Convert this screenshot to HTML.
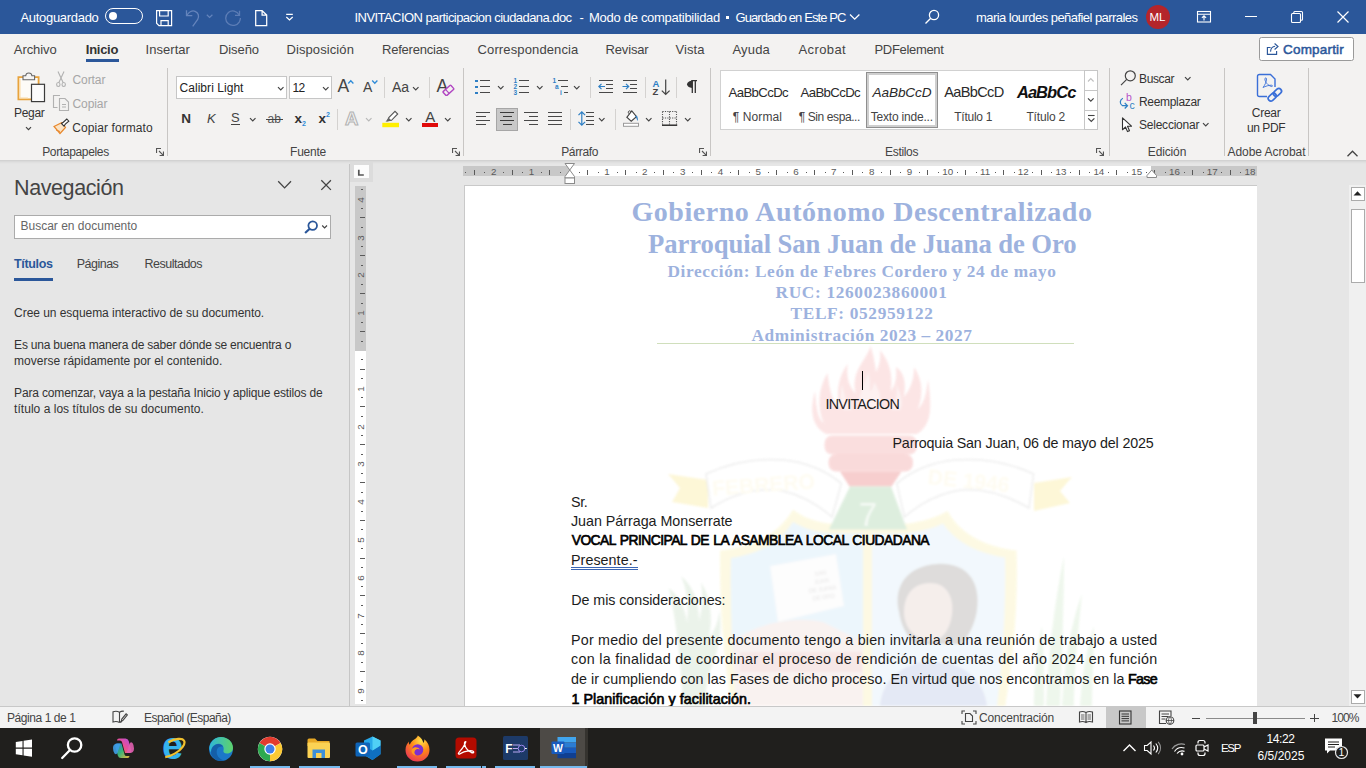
<!DOCTYPE html>
<html lang="es"><head><meta charset="utf-8"><title>INVITACION participacion ciudadana.doc - Word</title><style>
html,body{margin:0;padding:0}
body{width:1366px;height:768px;overflow:hidden;position:relative;background:#e6e6e6;font-family:"Liberation Sans",sans-serif;color:#444}
#r{position:absolute;left:0;top:0;width:1366px;height:768px;overflow:hidden}
#r>div,#r>svg,#r>span{position:absolute;display:block}
#r>span{white-space:pre;line-height:1}
.f{font-family:"Liberation Sans",sans-serif}
.g{font-family:"Liberation Serif",serif}
</style></head><body><div id="r">
<div style="left:0px;top:0px;width:1366px;height:34px;background:#2b579a;"></div>
<div style="left:0px;top:34px;width:1366px;height:126px;background:#f3f2f1;"></div>
<div style="left:0px;top:160px;width:1366px;height:1px;background:#d2d2d2;"></div>
<div style="left:0px;top:161px;width:1366px;height:1px;background:#dadada;"></div>
<div style="left:0px;top:162px;width:1366px;height:1px;background:#e0e0e0;"></div>
<div style="left:0px;top:163px;width:1366px;height:1px;background:#e4e4e4;"></div>
<span class="f" style="left:20.5px;top:11.00px;font-size:13px;color:#fff;letter-spacing:-0.307px;">Autoguardado</span>
<div style="left:105px;top:7.8px;width:36px;height:14px;border:1px solid #fff;border-radius:8px"></div>
<div style="left:109px;top:11.8px;width:8px;height:8px;border-radius:4px;background:#fff"></div>
<svg style="left:155px;top:9px;" width="18" height="18" viewBox="0 0 18 18"><g fill="none" stroke="#fff" stroke-width="1.200"><path d="M1.600 1.600h15v15h-12.600l-2.400-2.400z"/><path d="M4.600 1.600v5.400h8.600v-5.400M6 16.600v-5h7.200v5"/></g></svg>
<svg style="left:184px;top:8px;" width="30" height="20" viewBox="0 0 30 20"><g fill="none" stroke="#6484bc" stroke-width="1.300"><path d="M2.500 2.300v5.400h5.800"/><path d="M2.900 7.300c1.800-3.600 5.400-5.200 8.200-4 3.400 1.500 4.300 5 2.600 8.200l-5 6.800"/><path d="M22.800 6.800l2.800 2.600 2.800-2.600" stroke-width="1.200"/></g></svg>
<svg style="left:222px;top:6px;" width="20" height="22" viewBox="0 0 20 22"><g fill="none" stroke="#5c7db6" stroke-width="1.300"><path d="M17.500 4.800v4.500h-4.500"/><path d="M17.200 9c-2.200-4.200-7.400-5.300-10.800-2.500-3.600 3-3.600 8.400 0 11.300 3.500 2.800 8.700 1.900 11-2 .700-1.300 1-2.500 1-3.800"/></g></svg>
<svg style="left:254px;top:9px;" width="14" height="18" viewBox="0 0 14 18"><path d="M1.700 1.700h6.400l4.600 4.400v10.500h-11z M8.100 1.700v4.400h4.600" fill="none" stroke="#fff" stroke-width="1.250"/></svg>
<svg style="left:284px;top:12px;" width="12" height="10" viewBox="0 0 12 10"><path d="M2.200 2.400h6.600M2.300 5l3.200 2.900 3.200-2.900" fill="none" stroke="#fff" stroke-width="1.200"/></svg>
<span class="f" style="left:354.5px;top:11.00px;font-size:13px;color:#fff;letter-spacing:-0.558px;">INVITACION participacion ciudadana.doc</span>
<span class="f" style="left:579.5px;top:11.00px;font-size:13px;color:#fff;">-</span>
<span class="f" style="left:589.0px;top:11.00px;font-size:13px;color:#fff;letter-spacing:-0.287px;">Modo de compatibilidad</span>
<div style="left:726px;top:16px;width:3px;height:3px;background:#fff;"></div>
<span class="f" style="left:735.5px;top:11.00px;font-size:13px;color:#fff;letter-spacing:-0.905px;">Guardado en Este PC</span>
<svg style="left:848px;top:11px;" width="14" height="12" viewBox="0 0 14 12"><path d="M2 3.500l4.700 4.700 4.700-4.700" fill="none" stroke="#fff" stroke-width="1.300"/></svg>
<svg style="left:923px;top:8px;" width="18" height="18" viewBox="0 0 18 18"><g fill="none" stroke="#fff" stroke-width="1.300"><circle cx="11" cy="7" r="4.600"/><path d="M7.700 10.300l-5.200 5.200"/></g></svg>
<span class="f" style="left:976.0px;top:11.00px;font-size:13px;color:#fff;letter-spacing:-0.548px;">maria lourdes peñafiel parrales</span>
<div style="left:1145.500px;top:5px;width:24px;height:24px;border-radius:12px;background:#b4252b"></div>
<span class="f" style="left:1149.5px;top:12.00px;font-size:11.5px;color:#fff;letter-spacing:0.008px;">ML</span>
<svg style="left:1196px;top:10px;" width="16" height="14" viewBox="0 0 16 14"><g fill="none" stroke="#fff" stroke-width="1.100"><rect x="1.500" y="1.500" width="13" height="10.500"/><path d="M1.500 4.200h13M8 10.500v-4.500M5.900 7.800l2.100-2.100 2.100 2.100"/></g></svg>
<div style="left:1245px;top:15.5px;width:11.5px;height:1.2px;background:#fff;"></div>
<svg style="left:1290px;top:10px;" width="14" height="14" viewBox="0 0 14 14"><g fill="none" stroke="#fff" stroke-width="1.100"><rect x="1.500" y="3.500" width="9" height="9" rx="1"/><path d="M3.800 3.300v-0.800q0-1 1-1h6.700q1 0 1 1v6.700q0 1-1 1h-0.800"/></g></svg>
<svg style="left:1336px;top:10px;" width="14" height="14" viewBox="0 0 14 14"><path d="M1.500 1.500l11 11M12.500 1.500l-11 11" stroke="#fff" stroke-width="1.200" fill="none"/></svg>
<span class="f" style="left:13.8px;top:43.00px;font-size:13px;letter-spacing:-0.066px;">Archivo</span>
<span class="f" style="left:145.5px;top:43.00px;font-size:13px;letter-spacing:0.053px;">Insertar</span>
<span class="f" style="left:219.0px;top:43.00px;font-size:13px;letter-spacing:-0.078px;">Diseño</span>
<span class="f" style="left:286.5px;top:43.00px;font-size:13px;letter-spacing:0.092px;">Disposición</span>
<span class="f" style="left:382.0px;top:43.00px;font-size:13px;letter-spacing:-0.216px;">Referencias</span>
<span class="f" style="left:477.5px;top:43.00px;font-size:13px;letter-spacing:0.132px;">Correspondencia</span>
<span class="f" style="left:605.5px;top:43.00px;font-size:13px;letter-spacing:-0.154px;">Revisar</span>
<span class="f" style="left:675.5px;top:43.00px;font-size:13px;letter-spacing:0.066px;">Vista</span>
<span class="f" style="left:732.5px;top:43.00px;font-size:13px;letter-spacing:0.172px;">Ayuda</span>
<span class="f" style="left:798.5px;top:43.00px;font-size:13px;letter-spacing:0.384px;">Acrobat</span>
<span class="f" style="left:874.5px;top:43.00px;font-size:13px;letter-spacing:-0.325px;">PDFelement</span>
<span class="f" style="left:85.8px;top:43.00px;font-size:13px;color:#333;font-weight:700;letter-spacing:-0.276px;">Inicio</span>
<div style="left:86px;top:59px;width:33px;height:3px;background:#2b579a;"></div>
<div style="left:1259px;top:37px;width:92.500px;height:21.500px;border:1px solid #9a9a9a;border-radius:2.500px;background:#fff"></div>
<svg style="left:1266px;top:41px;" width="14" height="15" viewBox="0 0 14 15"><g fill="none" stroke="#2b579a" stroke-width="1.15"><path d="M4.6 6.5h-3.2v6.8h9.2v-3.4"/><path d="M4.5 10.6c.3-3.100 2-5.200 4.600-5.400"/><path d="M8.600 2.500l3.400 3-3.400 3"/></g></svg>
<span class="f" style="left:1283.0px;top:43.00px;font-size:13.5px;color:#2b579a;letter-spacing:0.193px;-webkit-text-stroke:0.5px #2b579a;">Compartir</span>
<div style="left:167px;top:68px;width:1px;height:88px;background:#c8c6c4;"></div>
<div style="left:463px;top:68px;width:1px;height:88px;background:#c8c6c4;"></div>
<div style="left:710px;top:68px;width:1px;height:88px;background:#c8c6c4;"></div>
<div style="left:1109px;top:68px;width:1px;height:88px;background:#c8c6c4;"></div>
<div style="left:1224px;top:68px;width:1px;height:88px;background:#c8c6c4;"></div>
<div style="left:1308px;top:68px;width:1px;height:88px;background:#c8c6c4;"></div>
<span class="f" style="left:42.2px;top:146.00px;font-size:12px;letter-spacing:-0.343px;">Portapapeles</span>
<span class="f" style="left:290.1px;top:146.00px;font-size:12px;letter-spacing:-0.243px;">Fuente</span>
<span class="f" style="left:561.2px;top:146.00px;font-size:12px;letter-spacing:-0.366px;">Párrafo</span>
<span class="f" style="left:885.1px;top:146.00px;font-size:12px;letter-spacing:-0.335px;">Estilos</span>
<span class="f" style="left:1147.8px;top:146.00px;font-size:12px;letter-spacing:-0.137px;">Edición</span>
<span class="f" style="left:1227.5px;top:146.00px;font-size:12px;letter-spacing:-0.056px;">Adobe Acrobat</span>
<svg style="left:155.5px;top:147.5px;" width="9" height="9" viewBox="0 0 9 9"><path d="M0.550 5v-4.450h4.450M3 3l4.300 4.300M7.450 3.600v3.850h-3.850" fill="none" stroke="#555" stroke-width="1.100"/></svg>
<svg style="left:451.5px;top:147.5px;" width="9" height="9" viewBox="0 0 9 9"><path d="M0.550 5v-4.450h4.450M3 3l4.300 4.300M7.450 3.600v3.850h-3.850" fill="none" stroke="#555" stroke-width="1.100"/></svg>
<svg style="left:698.5px;top:147.5px;" width="9" height="9" viewBox="0 0 9 9"><path d="M0.550 5v-4.450h4.450M3 3l4.300 4.300M7.450 3.600v3.850h-3.850" fill="none" stroke="#555" stroke-width="1.100"/></svg>
<svg style="left:1096.2px;top:147.5px;" width="9" height="9" viewBox="0 0 9 9"><path d="M0.550 5v-4.450h4.450M3 3l4.300 4.300M7.450 3.600v3.850h-3.850" fill="none" stroke="#555" stroke-width="1.100"/></svg>
<svg style="left:1346px;top:149px;" width="13" height="9" viewBox="0 0 13 9"><path d="M1.500 7.200l5-5 5 5" fill="none" stroke="#444" stroke-width="1.300"/></svg>
<svg style="left:16px;top:70px;" width="32" height="34" viewBox="0 0 32 34"><path d="M2.400 7.200h20.200v22.200h-20.200z" fill="#fdfbf7" stroke="#e8a33d" stroke-width="1.800"/><path d="M3.900 8.500v19.500h8" fill="none" stroke="#fad9a4" stroke-width="1.200"/>
<path d="M7 9.800v-4h2.700c.3-3.800 5.900-3.800 6.200 0h2.700v4z" fill="#f5f4f3" stroke="#666" stroke-width="1.100"/>
<rect x="15.500" y="14.300" width="13" height="17.300" fill="#fbfbfb" stroke="#3b3b3b" stroke-width="1.200"/></svg>
<span class="f" style="left:14.1px;top:107.00px;font-size:12px;color:#333;letter-spacing:-0.326px;">Pegar</span>
<svg style="left:25px;top:126px;" width="7" height="5.5" viewBox="0 0 7 5.5"><path d="M1 1.200l2.5 2.5 2.5-2.5" fill="none" stroke="#444" stroke-width="1.2"/></svg>
<svg style="left:54px;top:70px;" width="14" height="18" viewBox="0 0 14 18"><g fill="none" stroke="#b1b1b1" stroke-width="1.100"><path d="M4 1.500l5.200 11.300M10 1.500l-5.200 11.300"/><ellipse cx="4.300" cy="14.500" rx="1.700" ry="2"/><ellipse cx="9.700" cy="14.500" rx="1.700" ry="2"/></g></svg>
<span class="f" style="left:72.5px;top:74.00px;font-size:12px;color:#a6a6a6;letter-spacing:-0.091px;">Cortar</span>
<svg style="left:52px;top:94px;" width="18" height="18" viewBox="0 0 18 18"><g fill="none" stroke="#b1b1b1" stroke-width="1.100"><path d="M5.500 13.500h-4v-12h6.500"/><path d="M7.500 4.500h5.500l3.500 3.500v8.500h-9z"/><path d="M10 10.500h4M10 13h4"/></g></svg>
<span class="f" style="left:72.5px;top:98.00px;font-size:12px;color:#a6a6a6;letter-spacing:-0.093px;">Copiar</span>
<svg style="left:52px;top:117px;" width="18" height="18" viewBox="0 0 18 18"><path d="M2 9.500l8-4 3.500 5-5.500 6z" fill="#fbe3c4" stroke="#e8872b" stroke-width="1.200"/><path d="M4 13l4 1.500" stroke="#e8872b" stroke-width="1"/>
<path d="M9.500 6.500l1.800-1.300 3.500-3.200 2 2.200-3.500 3-1.300 2z" fill="#fff" stroke="#333" stroke-width="1.100"/></svg>
<span class="f" style="left:72.2px;top:122.00px;font-size:12px;color:#333;letter-spacing:0.088px;">Copiar formato</span>
<div style="left:176px;top:76px;width:109px;height:21px;background:#fff;border:1px solid #c6c6c6"></div>
<div style="left:289px;top:76px;width:41px;height:21px;background:#fff;border:1px solid #c6c6c6"></div>
<span class="f" style="left:179.5px;top:82.00px;font-size:12px;color:#222;letter-spacing:0.048px;">Calibri Light</span>
<span class="f" style="left:292.5px;top:82.00px;font-size:12px;color:#222;letter-spacing:-0.680px;">12</span>
<svg style="left:276.5px;top:85.7px;" width="7.5" height="5.75" viewBox="0 0 7.5 5.75"><path d="M1 1.200l2.75 2.75 2.75-2.75" fill="none" stroke="#444" stroke-width="1.2"/></svg>
<svg style="left:321.8px;top:85.7px;" width="7.5" height="5.75" viewBox="0 0 7.5 5.75"><path d="M1 1.200l2.75 2.75 2.75-2.75" fill="none" stroke="#444" stroke-width="1.2"/></svg>
<span class="f" style="left:181.2px;top:112.00px;font-size:13.5px;color:#333;font-weight:700;">N</span>
<span class="f" style="left:207.0px;top:112.00px;font-size:13px;font-style:italic;">K</span>
<span class="f" style="left:230.9px;top:111.00px;font-size:13px;">S</span>
<div style="left:231px;top:124px;width:8.5px;height:1.1px;background:#444;"></div>
<svg style="left:248.5px;top:117px;" width="7.5" height="5.75" viewBox="0 0 7.5 5.75"><path d="M1 1.200l2.75 2.75 2.75-2.75" fill="none" stroke="#444" stroke-width="1.2"/></svg>
<span class="f" style="left:267.5px;top:113.00px;font-size:12px;color:#555;letter-spacing:0.070px;">ab</span>
<div style="left:266px;top:118.8px;width:16.5px;height:1px;background:#444;"></div>
<span class="f" style="left:294.5px;top:112.00px;font-size:13.5px;color:#333;font-weight:700;">x</span>
<span class="f" style="left:302.0px;top:120.00px;font-size:7px;color:#2e8bd8;font-weight:700;">2</span>
<span class="f" style="left:318.5px;top:112.00px;font-size:13.5px;color:#333;font-weight:700;">x</span>
<span class="f" style="left:326.0px;top:111.00px;font-size:7px;color:#2e8bd8;font-weight:700;">2</span>
<span class="f" style="left:337.5px;top:78.00px;font-size:17.5px;">A</span>
<svg style="left:347px;top:79px;" width="8" height="6" viewBox="0 0 8 6"><path d="M1.200 4.500l2.600-2.800 2.600 2.800" fill="none" stroke="#2e8bd8" stroke-width="1.300"/></svg>
<span class="f" style="left:363.1px;top:80.00px;font-size:14px;">A</span>
<svg style="left:371px;top:79px;" width="8" height="6" viewBox="0 0 8 6"><path d="M1.200 1.500l2.600 2.800 2.600-2.800" fill="none" stroke="#2e8bd8" stroke-width="1.300"/></svg>
<div style="left:384px;top:77px;width:1px;height:21px;background:#d4d2d0;"></div>
<span class="f" style="left:392.0px;top:80.00px;font-size:14px;letter-spacing:-0.062px;">Aa</span>
<svg style="left:412px;top:85.5px;" width="7.5" height="5.75" viewBox="0 0 7.5 5.75"><path d="M1 1.200l2.75 2.75 2.75-2.75" fill="none" stroke="#444" stroke-width="1.2"/></svg>
<div style="left:429px;top:77px;width:1px;height:21px;background:#d4d2d0;"></div>
<span class="f" style="left:436.5px;top:78.00px;font-size:17.5px;">A</span>
<svg style="left:442px;top:84px;" width="13" height="12" viewBox="0 0 13 12"><g transform="rotate(-42 6.500 6.500)"><rect x="1.300" y="3.700" width="10.400" height="5.400" rx="0.800" fill="#f3f2f1" stroke="#b146c2" stroke-width="1.400"/><path d="M5 3.700v5.400" stroke="#b146c2" stroke-width="1.200"/></g></svg>
<div style="left:337px;top:109px;width:1px;height:21px;background:#d4d2d0;"></div>
<span class="f" style="left:345.0px;top:110.00px;font-size:18.5px;color:#f3f3f3;font-weight:700;-webkit-text-stroke:1.100px #b4b4b4;">A</span>
<svg style="left:365px;top:116.5px;" width="7.5" height="5.75" viewBox="0 0 7.5 5.75"><path d="M1 1.200l2.75 2.75 2.75-2.75" fill="none" stroke="#b8b8b8" stroke-width="1.2"/></svg>
<svg style="left:382px;top:109px;" width="19" height="19" viewBox="0 0 19 19"><rect x="0.300" y="13.800" width="16.700" height="4.400" fill="#ffef00"/><path d="M5.500 11.800l1.300-3.200 6.200-6.300 2.700 2.700-6.200 6.300z" fill="#fff" stroke="#555" stroke-width="1.100"/><path d="M3.500 12.800l3.200-4 2.800 2.800z" fill="#666"/></svg>
<svg style="left:404.8px;top:117px;" width="7.5" height="5.75" viewBox="0 0 7.5 5.75"><path d="M1 1.200l2.75 2.75 2.75-2.75" fill="none" stroke="#444" stroke-width="1.2"/></svg>
<span class="f" style="left:425.2px;top:109.00px;font-size:15px;">A</span>
<div style="left:422px;top:123px;width:16px;height:4.2px;background:#e00b0b;"></div>
<svg style="left:443.8px;top:117px;" width="7.5" height="5.75" viewBox="0 0 7.5 5.75"><path d="M1 1.200l2.75 2.75 2.75-2.75" fill="none" stroke="#444" stroke-width="1.2"/></svg>
<div style="left:475px;top:79.5px;width:2.6px;height:2.6px;background:#2e7fc4;"></div>
<div style="left:479.6px;top:80.3px;width:10.5px;height:1.1px;background:#484848;"></div>
<div style="left:475px;top:85.5px;width:2.6px;height:2.6px;background:#2e7fc4;"></div>
<div style="left:479.6px;top:86.3px;width:10.5px;height:1.1px;background:#484848;"></div>
<div style="left:475px;top:91.5px;width:2.6px;height:2.6px;background:#2e7fc4;"></div>
<div style="left:479.6px;top:92.3px;width:10.5px;height:1.1px;background:#484848;"></div>
<svg style="left:496.8px;top:85.2px;" width="7.5" height="5.75" viewBox="0 0 7.5 5.75"><path d="M1 1.200l2.75 2.75 2.75-2.75" fill="none" stroke="#444" stroke-width="1.2"/></svg>
<span class="f" style="left:513.5px;top:78.00px;font-size:6.5px;color:#2e7fc4;font-weight:700;">1</span>
<div style="left:518.5px;top:80.3px;width:10.5px;height:1.1px;background:#484848;"></div>
<span class="f" style="left:513.5px;top:84.00px;font-size:6.5px;color:#2e7fc4;font-weight:700;">2</span>
<div style="left:518.5px;top:86.3px;width:10.5px;height:1.1px;background:#484848;"></div>
<span class="f" style="left:513.5px;top:90.00px;font-size:6.5px;color:#2e7fc4;font-weight:700;">3</span>
<div style="left:518.5px;top:92.3px;width:10.5px;height:1.1px;background:#484848;"></div>
<svg style="left:535.8px;top:85.2px;" width="7.5" height="5.75" viewBox="0 0 7.5 5.75"><path d="M1 1.200l2.75 2.75 2.75-2.75" fill="none" stroke="#444" stroke-width="1.2"/></svg>
<span class="f" style="left:552.5px;top:78.00px;font-size:6.5px;color:#2e7fc4;font-weight:700;">1</span>
<div style="left:557.5px;top:80.3px;width:10.5px;height:1.1px;background:#484848;"></div>
<span class="f" style="left:555.0px;top:84.00px;font-size:6.5px;color:#2e7fc4;font-weight:700;">a</span>
<div style="left:561px;top:86.3px;width:7px;height:1.1px;background:#484848;"></div>
<span class="f" style="left:560.0px;top:90.00px;font-size:6.5px;color:#2e7fc4;font-weight:700;">i</span>
<div style="left:564px;top:92.3px;width:4px;height:1.1px;background:#484848;"></div>
<svg style="left:572.8px;top:85.2px;" width="7.5" height="5.75" viewBox="0 0 7.5 5.75"><path d="M1 1.200l2.75 2.75 2.75-2.75" fill="none" stroke="#444" stroke-width="1.2"/></svg>
<div style="left:590px;top:77px;width:1px;height:21px;background:#d4d2d0;"></div>
<div style="left:599px;top:80px;width:14.3px;height:1.1px;background:#484848;"></div>
<div style="left:605.8px;top:84px;width:7.5px;height:1.1px;background:#484848;"></div>
<div style="left:605.8px;top:88px;width:7.5px;height:1.1px;background:#484848;"></div>
<div style="left:599px;top:92px;width:14.3px;height:1.1px;background:#484848;"></div>
<svg style="left:598px;top:82px;" width="8" height="9" viewBox="0 0 8 9"><path d="M7 4.500h-6M3.500 1.800l-2.700 2.700 2.700 2.700" fill="none" stroke="#2e7fc4" stroke-width="1.200"/></svg>
<div style="left:623px;top:80px;width:14.3px;height:1.1px;background:#484848;"></div>
<div style="left:629.8px;top:84px;width:7.5px;height:1.1px;background:#484848;"></div>
<div style="left:629.8px;top:88px;width:7.5px;height:1.1px;background:#484848;"></div>
<div style="left:623px;top:92px;width:14.3px;height:1.1px;background:#484848;"></div>
<svg style="left:622px;top:82px;" width="8" height="9" viewBox="0 0 8 9"><path d="M0.500 4.500h6M4 1.800l2.700 2.700-2.700 2.700" fill="none" stroke="#2e7fc4" stroke-width="1.200"/></svg>
<div style="left:645px;top:77px;width:1px;height:21px;background:#d4d2d0;"></div>
<span class="f" style="left:652.5px;top:79.00px;font-size:9.5px;color:#2e7fc4;font-weight:700;">A</span>
<span class="f" style="left:652.5px;top:87.00px;font-size:9.5px;font-weight:700;">Z</span>
<svg style="left:661px;top:79px;" width="10" height="17" viewBox="0 0 10 17"><path d="M4.700 0.500v15M0.800 11.600l3.900 3.900 3.900-3.900" fill="none" stroke="#444" stroke-width="1.200"/></svg>
<div style="left:676px;top:77px;width:1px;height:21px;background:#d4d2d0;"></div>
<svg style="left:686px;top:80px;" width="12" height="14" viewBox="0 0 12 14"><path d="M5.200 0.700h5.800M6.300 1v12M9.300 1v12" stroke="#333" stroke-width="1.300" fill="none"/><path d="M6.300 0.700c-7 0-7 7.200 0 7.200z" fill="#333"/></svg>
<div style="left:476px;top:112.4px;width:14px;height:1.1px;background:#484848;"></div>
<div style="left:476px;top:116.4px;width:9.5px;height:1.1px;background:#484848;"></div>
<div style="left:476px;top:120.4px;width:14px;height:1.1px;background:#484848;"></div>
<div style="left:476px;top:124.4px;width:9.5px;height:1.1px;background:#484848;"></div>
<div style="left:496px;top:108px;width:19.800px;height:20.600px;background:#c8c8c8;border:1px solid #a6a6a6"></div>
<div style="left:500px;top:112.4px;width:14px;height:1.1px;background:#3b3b3b;"></div>
<div style="left:502.5px;top:116.4px;width:9px;height:1.1px;background:#3b3b3b;"></div>
<div style="left:500px;top:120.4px;width:14px;height:1.1px;background:#3b3b3b;"></div>
<div style="left:502.5px;top:124.4px;width:9px;height:1.1px;background:#3b3b3b;"></div>
<div style="left:524px;top:112.4px;width:14px;height:1.1px;background:#484848;"></div>
<div style="left:528.5px;top:116.4px;width:9.5px;height:1.1px;background:#484848;"></div>
<div style="left:524px;top:120.4px;width:14px;height:1.1px;background:#484848;"></div>
<div style="left:528.5px;top:124.4px;width:9.5px;height:1.1px;background:#484848;"></div>
<div style="left:548px;top:112.4px;width:14px;height:1.1px;background:#484848;"></div>
<div style="left:548px;top:116.4px;width:14px;height:1.1px;background:#484848;"></div>
<div style="left:548px;top:120.4px;width:14px;height:1.1px;background:#484848;"></div>
<div style="left:548px;top:124.4px;width:14px;height:1.1px;background:#484848;"></div>
<div style="left:570px;top:109px;width:1px;height:21px;background:#d4d2d0;"></div>
<svg style="left:577px;top:111px;" width="10" height="15" viewBox="0 0 10 15"><path d="M4.800 1v13M1.500 4.200l3.300-3.300 3.300 3.300M1.500 10.800l3.300 3.300 3.300-3.300" fill="none" stroke="#2e7fc4" stroke-width="1.200"/></svg>
<div style="left:585.5px;top:112.4px;width:8.8px;height:1.1px;background:#484848;"></div>
<div style="left:585.5px;top:116.4px;width:8.8px;height:1.1px;background:#484848;"></div>
<div style="left:585.5px;top:120.4px;width:8.8px;height:1.1px;background:#484848;"></div>
<div style="left:585.5px;top:124.4px;width:8.8px;height:1.1px;background:#484848;"></div>
<svg style="left:598px;top:117px;" width="7.5" height="5.75" viewBox="0 0 7.5 5.75"><path d="M1 1.200l2.75 2.75 2.75-2.75" fill="none" stroke="#444" stroke-width="1.2"/></svg>
<div style="left:615px;top:109px;width:1px;height:21px;background:#d4d2d0;"></div>
<svg style="left:622px;top:109px;" width="19" height="19" viewBox="0 0 19 19"><rect x="1.500" y="14.300" width="15" height="3" fill="#fff" stroke="#9a9a9a" stroke-width="1"/><path d="M4.800 8.300l5-6.300 4.700 5.600-5.300 4.600z" fill="#fff" stroke="#444" stroke-width="1.150"/><path d="M9.300 3c-1.800-2.300-3.600-.8-2.800 1.500" fill="none" stroke="#444" stroke-width="1"/><path d="M14.200 6.500c1.700 1.300 2 3.400 1.500 5.500-1-1.300-1-3.300-2.500-4.500z" fill="#2e7fc4"/></svg>
<svg style="left:645px;top:117px;" width="7.5" height="5.75" viewBox="0 0 7.5 5.75"><path d="M1 1.200l2.75 2.75 2.75-2.75" fill="none" stroke="#444" stroke-width="1.2"/></svg>
<svg style="left:661px;top:110px;" width="17" height="17" viewBox="0 0 17 17"><g stroke="#555" stroke-width="1.100" stroke-dasharray="1.200 1.200" fill="none"><path d="M1.500 1.500h14M1.500 1.500v13M15.500 1.500v13M8.500 1.500v13M1.500 8h14"/></g><path d="M1 15.200h15.200" stroke="#222" stroke-width="1.400"/></svg>
<svg style="left:683.6px;top:117px;" width="7.5" height="5.75" viewBox="0 0 7.5 5.75"><path d="M1 1.200l2.75 2.75 2.75-2.75" fill="none" stroke="#444" stroke-width="1.2"/></svg>
<div style="left:720px;top:70px;width:377px;height:60px;background:#fff;border:1px solid #d1d1d1;box-sizing:border-box"></div>
<div style="left:1083.500px;top:70px;width:14px;height:60px;background:#fff;border:1px solid #c6c6c6;box-sizing:border-box"></div>
<div style="left:1083.5px;top:90.3px;width:14px;height:1px;background:#c6c6c6;"></div>
<div style="left:1083.5px;top:109.6px;width:14px;height:1px;background:#c6c6c6;"></div>
<svg style="left:1087px;top:77px;" width="8" height="6" viewBox="0 0 8 6"><path d="M1 4.500l2.800-2.800 2.800 2.800" fill="none" stroke="#c0c0c0" stroke-width="1.200"/></svg>
<svg style="left:1087px;top:97px;" width="8" height="6" viewBox="0 0 8 6"><path d="M1 1.300l2.800 2.800 2.800-2.800" fill="none" stroke="#444" stroke-width="1.200"/></svg>
<svg style="left:1086.5px;top:114px;" width="9" height="10" viewBox="0 0 9 10"><path d="M1 1.500h6.600" stroke="#444" stroke-width="1.100"/><path d="M1.200 4.300l3.100 3.100 3.100-3.100" fill="none" stroke="#444" stroke-width="1.200"/></svg>
<div style="left:866px;top:72px;width:66px;height:50px;border:1px solid #8f8f8f;box-shadow:inset 0 0 0 2px #cfcfcf;background:#fff;padding:2px"></div>
<span class="f" style="left:728.5px;top:86.00px;font-size:13.2px;color:#2a2a2a;letter-spacing:-0.625px;">AaBbCcDc</span>
<span class="f" style="left:800.5px;top:86.00px;font-size:13.2px;color:#2a2a2a;letter-spacing:-0.625px;">AaBbCcDc</span>
<span class="f" style="left:872.5px;top:86.00px;font-size:13.6px;color:#2a2a2a;font-style:italic;letter-spacing:-0.098px;">AaBbCcD</span>
<span class="f" style="left:944.2px;top:85.00px;font-size:14.6px;color:#2a2a2a;letter-spacing:-0.683px;">AaBbCcD</span>
<span class="f" style="left:1016.9px;top:84.00px;font-size:16.5px;color:#111;font-weight:700;font-style:italic;letter-spacing:-0.931px;">AaBbCc</span>
<span class="f" style="left:732.8px;top:111.00px;font-size:12px;letter-spacing:0.106px;">¶ Normal</span>
<span class="f" style="left:798.7px;top:111.00px;font-size:12px;letter-spacing:-0.399px;">¶ Sin espa...</span>
<span class="f" style="left:870.8px;top:111.00px;font-size:12px;letter-spacing:-0.209px;">Texto inde...</span>
<span class="f" style="left:954.3px;top:111.00px;font-size:12px;letter-spacing:-0.254px;">Título 1</span>
<span class="f" style="left:1026.4px;top:111.00px;font-size:12px;letter-spacing:-0.166px;">Título 2</span>
<svg style="left:1119px;top:69px;" width="19" height="18" viewBox="0 0 19 18"><g fill="none" stroke="#444" stroke-width="1.200"><circle cx="11.300" cy="6.800" r="5"/><path d="M7.700 10.400l-5.700 5.700"/></g></svg>
<span class="f" style="left:1139.0px;top:73.00px;font-size:12px;color:#333;letter-spacing:-0.377px;">Buscar</span>
<svg style="left:1184px;top:75.8px;" width="7.5" height="5.75" viewBox="0 0 7.5 5.75"><path d="M1 1.200l2.75 2.75 2.75-2.75" fill="none" stroke="#444" stroke-width="1.2"/></svg>
<svg style="left:1118px;top:93px;" width="18" height="17" viewBox="0 0 18 17"><path d="M4.900 5.300c-3.200 1.400-3.600 5.600-.400 7.400h4.800M6.700 9.900l2.800 2.800-2.800 2.800" fill="none" stroke="#2e7fc4" stroke-width="1.250"/></svg>
<span class="f" style="left:1126.0px;top:92.00px;font-size:10.5px;color:#b652c8;">b</span>
<span class="f" style="left:1129.5px;top:100.00px;font-size:10.5px;color:#2e7fc4;">c</span>
<span class="f" style="left:1139.0px;top:96.00px;font-size:12px;color:#333;letter-spacing:-0.320px;">Reemplazar</span>
<svg style="left:1120px;top:116px;" width="14" height="17" viewBox="0 0 14 17"><path d="M2.500 1.800v12l3-2.800 2 4.600 2-.9-2-4.500h4z" fill="#fff" stroke="#333" stroke-width="1.100" stroke-linejoin="round"/></svg>
<span class="f" style="left:1139.0px;top:119.00px;font-size:12px;color:#333;letter-spacing:-0.228px;">Seleccionar</span>
<svg style="left:1202px;top:122.2px;" width="7.5" height="5.75" viewBox="0 0 7.5 5.75"><path d="M1 1.200l2.75 2.75 2.75-2.75" fill="none" stroke="#444" stroke-width="1.2"/></svg>
<svg style="left:1255px;top:72px;" width="29" height="32" viewBox="0 0 29 32"><g fill="none" stroke="#3a6fd8" stroke-width="1.400"><path d="M12 24.500h-7.500q-2 0-2-2v-18q0-2 2-2h11l4.500 4.500v8"/><path d="M8 15.500c2-2.500 3.500-6 3.500-8.500 0-1.500-1.600-1.500-1.600 0 0 3 3 6.500 6.500 7.500 1.500.3 1.500-1.300 0-1.300-2.500 0-6 1-8.400 2.300z" stroke-width="0.900"/></g><g fill="none" stroke="#3a6fd8" stroke-width="1.700" transform="rotate(-42 20 22.600)"><rect x="11.800" y="19.900" width="9" height="5.400" rx="2.700"/><rect x="18.800" y="19.900" width="9" height="5.400" rx="2.700"/></g></svg>
<span class="f" style="left:1251.8px;top:107.00px;font-size:12px;color:#333;letter-spacing:-0.263px;">Crear</span>
<span class="f" style="left:1246.9px;top:122.00px;font-size:12px;color:#333;letter-spacing:-0.415px;">un PDF</span>
<div style="left:349px;top:164px;width:1px;height:542px;background:#c6c6c6;"></div>
<span class="f" style="left:14.1px;top:178.00px;font-size:21.5px;letter-spacing:-0.415px;">Navegación</span>
<svg style="left:276px;top:179px;" width="18" height="12" viewBox="0 0 18 12"><path d="M2.200 2.300l6.400 6.600 6.400-6.600" fill="none" stroke="#444" stroke-width="1.300"/></svg>
<svg style="left:319px;top:178px;" width="14" height="14" viewBox="0 0 14 14"><path d="M2.300 2.300l9.600 9.600M11.900 2.300l-9.600 9.600" fill="none" stroke="#444" stroke-width="1.300"/></svg>
<div style="left:14px;top:215px;width:315px;height:21.500px;background:#fff;border:1px solid #ababab"></div>
<span class="f" style="left:20.5px;top:220.00px;font-size:12px;color:#666;">Buscar en documento</span>
<svg style="left:303px;top:219px;" width="16" height="16" viewBox="0 0 16 16"><g fill="none" stroke="#2b579a" stroke-width="1.800"><circle cx="9.700" cy="6.600" r="4.300"/><path d="M6.700 9.700l-4.600 4.300" stroke-width="2.200"/></g></svg>
<svg style="left:320.5px;top:224px;" width="8" height="6" viewBox="0 0 8 6"><path d="M1.200 1.500l2.400 2.400 2.400-2.400" fill="none" stroke="#444" stroke-width="1.200"/></svg>
<span class="f" style="left:14.1px;top:258.00px;font-size:12.5px;color:#2b579a;font-weight:700;letter-spacing:-0.367px;">Títulos</span>
<div style="left:14px;top:277.5px;width:39.3px;height:3px;background:#2b579a;"></div>
<span class="f" style="left:76.8px;top:258.00px;font-size:12.5px;letter-spacing:-0.527px;">Páginas</span>
<span class="f" style="left:144.5px;top:258.00px;font-size:12.5px;letter-spacing:-0.495px;">Resultados</span>
<span class="f" style="left:14.1px;top:307.00px;font-size:12px;color:#333;letter-spacing:-0.049px;">Cree un esquema interactivo de su documento.</span>
<span class="f" style="left:14.1px;top:339.00px;font-size:12px;color:#333;letter-spacing:-0.215px;">Es una buena manera de saber dónde se encuentra o</span>
<span class="f" style="left:14.1px;top:355.00px;font-size:12px;color:#333;">moverse rápidamente por el contenido.</span>
<span class="f" style="left:14.1px;top:387.00px;font-size:12px;color:#333;letter-spacing:-0.163px;">Para comenzar, vaya a la pestaña Inicio y aplique estilos de</span>
<span class="f" style="left:14.1px;top:403.00px;font-size:12px;color:#333;letter-spacing:0.028px;">título a los títulos de su documento.</span>
<div style="left:350px;top:161.5px;width:22.5px;height:20px;background:#dcdcdc;"></div>
<div style="left:353.5px;top:165px;width:15px;height:13.2px;background:#fcfcfc;"></div>
<svg style="left:357px;top:169px;" width="8" height="8" viewBox="0 0 8 8"><path d="M1.800 0.800v5.200h5" fill="none" stroke="#555" stroke-width="1.700"/></svg>
<div style="left:463px;top:166px;width:106.5px;height:10px;background:#c8c8c8;"></div>
<div style="left:569.5px;top:166px;width:581.5px;height:10px;background:#fff;"></div>
<div style="left:1151px;top:166px;width:105.5px;height:10px;background:#c8c8c8;"></div>
<div style="left:465.0px;top:171.5px;width:1px;height:1.3px;background:#5a5a5a;"></div>
<div style="left:473.5px;top:169.5px;width:1px;height:5px;background:#5a5a5a;"></div>
<div style="left:484.0px;top:171.5px;width:1px;height:1.3px;background:#5a5a5a;"></div>
<span class="f" style="left:490.9px;top:167.00px;font-size:9.8px;color:#5a5a5a;">2</span>
<div style="left:503.0px;top:171.5px;width:1px;height:1.3px;background:#5a5a5a;"></div>
<div style="left:511.5px;top:169.5px;width:1px;height:5px;background:#5a5a5a;"></div>
<div style="left:522.0px;top:171.5px;width:1px;height:1.3px;background:#5a5a5a;"></div>
<span class="f" style="left:528.7px;top:167.00px;font-size:9.8px;color:#5a5a5a;">1</span>
<div style="left:540.5px;top:171.5px;width:1px;height:1.3px;background:#5a5a5a;"></div>
<div style="left:549.0px;top:169.5px;width:1px;height:5px;background:#5a5a5a;"></div>
<div style="left:559.5px;top:171.5px;width:1px;height:1.3px;background:#5a5a5a;"></div>
<div style="left:578.5px;top:171.5px;width:1px;height:1.3px;background:#5a5a5a;"></div>
<div style="left:587.0px;top:169.5px;width:1px;height:5px;background:#5a5a5a;"></div>
<div style="left:597.5px;top:171.5px;width:1px;height:1.3px;background:#5a5a5a;"></div>
<span class="f" style="left:604.3px;top:167.00px;font-size:9.8px;color:#5a5a5a;">1</span>
<div style="left:616.5px;top:171.5px;width:1px;height:1.3px;background:#5a5a5a;"></div>
<div style="left:625.0px;top:169.5px;width:1px;height:5px;background:#5a5a5a;"></div>
<div style="left:635.5px;top:171.5px;width:1px;height:1.3px;background:#5a5a5a;"></div>
<span class="f" style="left:642.1px;top:167.00px;font-size:9.8px;color:#5a5a5a;">2</span>
<div style="left:654.0px;top:171.5px;width:1px;height:1.3px;background:#5a5a5a;"></div>
<div style="left:662.5px;top:169.5px;width:1px;height:5px;background:#5a5a5a;"></div>
<div style="left:673.0px;top:171.5px;width:1px;height:1.3px;background:#5a5a5a;"></div>
<span class="f" style="left:679.9px;top:167.00px;font-size:9.8px;color:#5a5a5a;">3</span>
<div style="left:692.0px;top:171.5px;width:1px;height:1.3px;background:#5a5a5a;"></div>
<div style="left:700.5px;top:169.5px;width:1px;height:5px;background:#5a5a5a;"></div>
<div style="left:711.0px;top:171.5px;width:1px;height:1.3px;background:#5a5a5a;"></div>
<span class="f" style="left:717.7px;top:167.00px;font-size:9.8px;color:#5a5a5a;">4</span>
<div style="left:729.5px;top:171.5px;width:1px;height:1.3px;background:#5a5a5a;"></div>
<div style="left:738.0px;top:169.5px;width:1px;height:5px;background:#5a5a5a;"></div>
<div style="left:748.5px;top:171.5px;width:1px;height:1.3px;background:#5a5a5a;"></div>
<span class="f" style="left:755.5px;top:167.00px;font-size:9.8px;color:#5a5a5a;">5</span>
<div style="left:767.5px;top:171.5px;width:1px;height:1.3px;background:#5a5a5a;"></div>
<div style="left:776.0px;top:169.5px;width:1px;height:5px;background:#5a5a5a;"></div>
<div style="left:786.5px;top:171.5px;width:1px;height:1.3px;background:#5a5a5a;"></div>
<span class="f" style="left:793.3px;top:167.00px;font-size:9.8px;color:#5a5a5a;">6</span>
<div style="left:805.5px;top:171.5px;width:1px;height:1.3px;background:#5a5a5a;"></div>
<div style="left:814.0px;top:169.5px;width:1px;height:5px;background:#5a5a5a;"></div>
<div style="left:824.5px;top:171.5px;width:1px;height:1.3px;background:#5a5a5a;"></div>
<span class="f" style="left:831.1px;top:167.00px;font-size:9.8px;color:#5a5a5a;">7</span>
<div style="left:843.0px;top:171.5px;width:1px;height:1.3px;background:#5a5a5a;"></div>
<div style="left:851.5px;top:169.5px;width:1px;height:5px;background:#5a5a5a;"></div>
<div style="left:862.0px;top:171.5px;width:1px;height:1.3px;background:#5a5a5a;"></div>
<span class="f" style="left:868.9px;top:167.00px;font-size:9.8px;color:#5a5a5a;">8</span>
<div style="left:881.0px;top:171.5px;width:1px;height:1.3px;background:#5a5a5a;"></div>
<div style="left:889.5px;top:169.5px;width:1px;height:5px;background:#5a5a5a;"></div>
<div style="left:900.0px;top:171.5px;width:1px;height:1.3px;background:#5a5a5a;"></div>
<span class="f" style="left:906.7px;top:167.00px;font-size:9.8px;color:#5a5a5a;">9</span>
<div style="left:918.5px;top:171.5px;width:1px;height:1.3px;background:#5a5a5a;"></div>
<div style="left:927.0px;top:169.5px;width:1px;height:5px;background:#5a5a5a;"></div>
<div style="left:937.5px;top:171.5px;width:1px;height:1.3px;background:#5a5a5a;"></div>
<span class="f" style="left:942.2px;top:167.00px;font-size:9.8px;color:#5a5a5a;">10</span>
<div style="left:956.5px;top:171.5px;width:1px;height:1.3px;background:#5a5a5a;"></div>
<div style="left:965.0px;top:169.5px;width:1px;height:5px;background:#5a5a5a;"></div>
<div style="left:975.5px;top:171.5px;width:1px;height:1.3px;background:#5a5a5a;"></div>
<span class="f" style="left:980.0px;top:167.00px;font-size:9.8px;color:#5a5a5a;">11</span>
<div style="left:994.5px;top:171.5px;width:1px;height:1.3px;background:#5a5a5a;"></div>
<div style="left:1003.0px;top:169.5px;width:1px;height:5px;background:#5a5a5a;"></div>
<div style="left:1013.5px;top:171.5px;width:1px;height:1.3px;background:#5a5a5a;"></div>
<span class="f" style="left:1017.8px;top:167.00px;font-size:9.8px;color:#5a5a5a;">12</span>
<div style="left:1032.0px;top:171.5px;width:1px;height:1.3px;background:#5a5a5a;"></div>
<div style="left:1040.5px;top:169.5px;width:1px;height:5px;background:#5a5a5a;"></div>
<div style="left:1051.0px;top:171.5px;width:1px;height:1.3px;background:#5a5a5a;"></div>
<span class="f" style="left:1055.6px;top:167.00px;font-size:9.8px;color:#5a5a5a;">13</span>
<div style="left:1070.0px;top:171.5px;width:1px;height:1.3px;background:#5a5a5a;"></div>
<div style="left:1078.5px;top:169.5px;width:1px;height:5px;background:#5a5a5a;"></div>
<div style="left:1089.0px;top:171.5px;width:1px;height:1.3px;background:#5a5a5a;"></div>
<span class="f" style="left:1093.4px;top:167.00px;font-size:9.8px;color:#5a5a5a;">14</span>
<div style="left:1107.5px;top:171.5px;width:1px;height:1.3px;background:#5a5a5a;"></div>
<div style="left:1116.0px;top:169.5px;width:1px;height:5px;background:#5a5a5a;"></div>
<div style="left:1126.5px;top:171.5px;width:1px;height:1.3px;background:#5a5a5a;"></div>
<span class="f" style="left:1131.2px;top:167.00px;font-size:9.8px;color:#5a5a5a;">15</span>
<div style="left:1145.5px;top:171.5px;width:1px;height:1.3px;background:#5a5a5a;"></div>
<div style="left:1154.0px;top:169.5px;width:1px;height:5px;background:#5a5a5a;"></div>
<div style="left:1164.5px;top:171.5px;width:1px;height:1.3px;background:#5a5a5a;"></div>
<span class="f" style="left:1169.0px;top:167.00px;font-size:9.8px;color:#5a5a5a;">16</span>
<div style="left:1183.5px;top:171.5px;width:1px;height:1.3px;background:#5a5a5a;"></div>
<div style="left:1192.0px;top:169.5px;width:1px;height:5px;background:#5a5a5a;"></div>
<div style="left:1202.5px;top:171.5px;width:1px;height:1.3px;background:#5a5a5a;"></div>
<span class="f" style="left:1206.8px;top:167.00px;font-size:9.8px;color:#5a5a5a;">17</span>
<div style="left:1221.0px;top:171.5px;width:1px;height:1.3px;background:#5a5a5a;"></div>
<div style="left:1229.5px;top:169.5px;width:1px;height:5px;background:#5a5a5a;"></div>
<div style="left:1240.0px;top:171.5px;width:1px;height:1.3px;background:#5a5a5a;"></div>
<span class="f" style="left:1244.6px;top:167.00px;font-size:9.8px;color:#5a5a5a;">18</span>
<svg style="left:564px;top:162px;" width="12" height="23" viewBox="0 0 12 23"><g fill="#fff" stroke="#8a8a8a" stroke-width="1"><path d="M1 1.500h9.500l-4.750 6.500z"/><path d="M1 16v-1.500l4.750-6.500 4.750 6.500v1.500z"/><rect x="1" y="16" width="9.500" height="5.500"/></g></svg>
<svg style="left:1145.5px;top:169px;" width="12" height="10" viewBox="0 0 12 10"><path d="M1 8.500v-2l4.750-5.500 4.750 5.500v2z" fill="#fff" stroke="#8a8a8a" stroke-width="1"/></svg>
<div style="left:354.5px;top:185.5px;width:11px;height:165.8px;background:#c8c8c8;"></div>
<div style="left:354.5px;top:351.3px;width:11px;height:352.7px;background:#fff;"></div>
<div style="left:361.2px;top:189.0px;width:1.4px;height:1.2px;background:#5a5a5a;"></div>
<span class="f" style="left:356.4px;top:194.7px;width:10px;height:10px;font-size:9.800px;line-height:10px;text-align:center;color:#5a5a5a;transform:rotate(-90deg)">4</span>
<div style="left:361.2px;top:208.0px;width:1.4px;height:1.2px;background:#5a5a5a;"></div>
<div style="left:359.5px;top:217.0px;width:5px;height:1px;background:#5a5a5a;"></div>
<div style="left:361.2px;top:227.0px;width:1.4px;height:1.2px;background:#5a5a5a;"></div>
<span class="f" style="left:356.4px;top:232.5px;width:10px;height:10px;font-size:9.800px;line-height:10px;text-align:center;color:#5a5a5a;transform:rotate(-90deg)">3</span>
<div style="left:361.2px;top:245.5px;width:1.4px;height:1.2px;background:#5a5a5a;"></div>
<div style="left:359.5px;top:255.0px;width:5px;height:1px;background:#5a5a5a;"></div>
<div style="left:361.2px;top:264.5px;width:1.4px;height:1.2px;background:#5a5a5a;"></div>
<span class="f" style="left:356.4px;top:270.3px;width:10px;height:10px;font-size:9.800px;line-height:10px;text-align:center;color:#5a5a5a;transform:rotate(-90deg)">2</span>
<div style="left:361.2px;top:283.5px;width:1.4px;height:1.2px;background:#5a5a5a;"></div>
<div style="left:359.5px;top:292.5px;width:5px;height:1px;background:#5a5a5a;"></div>
<div style="left:361.2px;top:302.5px;width:1.4px;height:1.2px;background:#5a5a5a;"></div>
<span class="f" style="left:356.4px;top:308.1px;width:10px;height:10px;font-size:9.800px;line-height:10px;text-align:center;color:#5a5a5a;transform:rotate(-90deg)">1</span>
<div style="left:361.2px;top:321.5px;width:1.4px;height:1.2px;background:#5a5a5a;"></div>
<div style="left:359.5px;top:330.5px;width:5px;height:1px;background:#5a5a5a;"></div>
<div style="left:361.2px;top:340.5px;width:1.4px;height:1.2px;background:#5a5a5a;"></div>
<div style="left:361.2px;top:359.0px;width:1.4px;height:1.2px;background:#5a5a5a;"></div>
<div style="left:359.5px;top:368.5px;width:5px;height:1px;background:#5a5a5a;"></div>
<div style="left:361.2px;top:378.0px;width:1.4px;height:1.2px;background:#5a5a5a;"></div>
<span class="f" style="left:356.4px;top:383.7px;width:10px;height:10px;font-size:9.800px;line-height:10px;text-align:center;color:#5a5a5a;transform:rotate(-90deg)">1</span>
<div style="left:361.2px;top:397.0px;width:1.4px;height:1.2px;background:#5a5a5a;"></div>
<div style="left:359.5px;top:406.0px;width:5px;height:1px;background:#5a5a5a;"></div>
<div style="left:361.2px;top:416.0px;width:1.4px;height:1.2px;background:#5a5a5a;"></div>
<span class="f" style="left:356.4px;top:421.5px;width:10px;height:10px;font-size:9.800px;line-height:10px;text-align:center;color:#5a5a5a;transform:rotate(-90deg)">2</span>
<div style="left:361.2px;top:434.5px;width:1.4px;height:1.2px;background:#5a5a5a;"></div>
<div style="left:359.5px;top:444.0px;width:5px;height:1px;background:#5a5a5a;"></div>
<div style="left:361.2px;top:453.5px;width:1.4px;height:1.2px;background:#5a5a5a;"></div>
<span class="f" style="left:356.4px;top:459.3px;width:10px;height:10px;font-size:9.800px;line-height:10px;text-align:center;color:#5a5a5a;transform:rotate(-90deg)">3</span>
<div style="left:361.2px;top:472.5px;width:1.4px;height:1.2px;background:#5a5a5a;"></div>
<div style="left:359.5px;top:481.5px;width:5px;height:1px;background:#5a5a5a;"></div>
<div style="left:361.2px;top:491.5px;width:1.4px;height:1.2px;background:#5a5a5a;"></div>
<span class="f" style="left:356.4px;top:497.1px;width:10px;height:10px;font-size:9.800px;line-height:10px;text-align:center;color:#5a5a5a;transform:rotate(-90deg)">4</span>
<div style="left:361.2px;top:510.5px;width:1.4px;height:1.2px;background:#5a5a5a;"></div>
<div style="left:359.5px;top:519.5px;width:5px;height:1px;background:#5a5a5a;"></div>
<div style="left:361.2px;top:529.0px;width:1.4px;height:1.2px;background:#5a5a5a;"></div>
<span class="f" style="left:356.4px;top:534.9px;width:10px;height:10px;font-size:9.800px;line-height:10px;text-align:center;color:#5a5a5a;transform:rotate(-90deg)">5</span>
<div style="left:361.2px;top:548.0px;width:1.4px;height:1.2px;background:#5a5a5a;"></div>
<div style="left:359.5px;top:557.5px;width:5px;height:1px;background:#5a5a5a;"></div>
<div style="left:361.2px;top:567.0px;width:1.4px;height:1.2px;background:#5a5a5a;"></div>
<span class="f" style="left:356.4px;top:572.7px;width:10px;height:10px;font-size:9.800px;line-height:10px;text-align:center;color:#5a5a5a;transform:rotate(-90deg)">6</span>
<div style="left:361.2px;top:586.0px;width:1.4px;height:1.2px;background:#5a5a5a;"></div>
<div style="left:359.5px;top:595.0px;width:5px;height:1px;background:#5a5a5a;"></div>
<div style="left:361.2px;top:605.0px;width:1.4px;height:1.2px;background:#5a5a5a;"></div>
<span class="f" style="left:356.4px;top:610.5px;width:10px;height:10px;font-size:9.800px;line-height:10px;text-align:center;color:#5a5a5a;transform:rotate(-90deg)">7</span>
<div style="left:361.2px;top:623.5px;width:1.4px;height:1.2px;background:#5a5a5a;"></div>
<div style="left:359.5px;top:633.0px;width:5px;height:1px;background:#5a5a5a;"></div>
<div style="left:361.2px;top:642.5px;width:1.4px;height:1.2px;background:#5a5a5a;"></div>
<span class="f" style="left:356.4px;top:648.3px;width:10px;height:10px;font-size:9.800px;line-height:10px;text-align:center;color:#5a5a5a;transform:rotate(-90deg)">8</span>
<div style="left:361.2px;top:661.5px;width:1.4px;height:1.2px;background:#5a5a5a;"></div>
<div style="left:359.5px;top:670.5px;width:5px;height:1px;background:#5a5a5a;"></div>
<div style="left:361.2px;top:680.5px;width:1.4px;height:1.2px;background:#5a5a5a;"></div>
<span class="f" style="left:356.4px;top:686.1px;width:10px;height:10px;font-size:9.800px;line-height:10px;text-align:center;color:#5a5a5a;transform:rotate(-90deg)">9</span>
<div style="left:361.2px;top:699.5px;width:1.4px;height:1.2px;background:#5a5a5a;"></div>
<div style="left:464px;top:185px;width:793px;height:522px;background:#c9c9c9;"></div>
<div style="left:465px;top:185.5px;width:791.5px;height:522px;background:#fff;"></div>
<svg style="left:640px;top:340px;" width="460" height="368" viewBox="640 340 460 368">
<defs><filter id="wb" x="-5%" y="-5%" width="110%" height="110%"><feGaussianBlur stdDeviation="0.800"/></filter></defs>
<g filter="url(#wb)" opacity="0.880">
<!-- laurel left / grass right -->
<path d="M683 706c-2-40-6-80-14-118 10 8 16 20 18 34 2-16 0-32-6-46 12 10 18 26 18 44 4-14 4-26 2-38 10 16 12 36 8 56 6-8 10-18 10-28 4 18 0 40-8 58-4 14-6 26-6 38z" fill="#e9f2e8"/>
<path d="M1046 706c2-50 8-100 18-150 0 50-2 100-4 150zM1062 706c2-40 8-80 20-112-4 40-8 76-8 112zM1080 706c2-30 6-56 14-80 0 28-2 54-2 80zM1034 706c0-30 2-56 8-80 2 28 2 54 2 80z" fill="#ecf6ea"/>
<!-- banner tails -->
<path d="M668 474l40 6v28l-36-6 8-14z" fill="#fdf6d2"/>
<path d="M1072 477l-38 6v28l36-8-10-12z" fill="#fdf6d2"/>
<!-- shield -->
<path d="M721 550.500c30-4 56-14 72-41 10 8 22 12 36 14h79c14-2 28-6 39.600-12.500 14 25 40 36 69 39.500 2 60-4 110-11.200 155.500h-274c-8-50-12-100-11.400-155.500z" fill="#fdf9e0"/>
<path d="M731 558c26-4 48-14 62-36 10 6 22 10 36 11.500h34v172.500h-126c-5-50-7-100-6-148z" fill="#eaf5fc"/>
<path d="M872 533.500h33c14-1.500 28-5 38-10 14 20 36 30 62 34 1 50-2 100-8 148.500h-125z" fill="#f1f8fd"/>
<path d="M733 640c30-18 60-24 90-18l40 20v64h-126c-2-22-4-44-4-66z" fill="#f9f1ef"/>
<path d="M770 566l66-12 8 52-66 16z" fill="#fdfdfd"/>
<path d="M740 652h122v20h-122z" fill="#f7e0e0" opacity="0.700"/>
<path d="M899 612c-6-26 8-46 38-48 30-2 44 18 40 46-2 14-8 26-16 34h-46c-8-8-14-18-16-32z" fill="#dad8d7"/>
<path d="M904 612c0-18 10-29 26-29s24 13 22 31c-2 16-10 27-22 27s-26-11-26-29z" fill="#f4ece9"/>
<path d="M880 706c2-24 18-38 40-44h26c22 6 38 20 41 44z" fill="#e1e6f4"/>
<!-- torch -->
<path d="M870.600 346c-5 16-20 24-15 48-8-10-9-18-8-30-9 12-12 28-8 44-7-7-10-16-12-35-9 14-11 34-4 50-4-4-7-8-8.600-32-6 22-2 36 11 43h91c13-8 16-22 11-55-2 20-6 26-10 30 6-16 4-30-4-42 0 14-4 22-10 30 3-18-2-26-8-30 1 12-1 18-5 24 2-18-2-30-11-41 1 10-1 16-4 22-1-10-3-18-5.400-26z" fill="#fce2e2"/>
<path d="M868 372c-3 14-10 20-8 36h20c2-12-2-20-6-26-1 6-2 8-4 10 0-8 0-14-2-20zM842 384c-2 10-2 18 2 26h8c-6-8-8-16-10-26zM896 384c2 10 0 18-4 26h8c4-8 0-18-4-26z" fill="#fdf0f0"/>
<rect x="824.500" y="435.500" width="92.500" height="19" rx="8" fill="#fadada"/>
<rect x="828.500" y="454" width="84.500" height="17.500" rx="8" fill="#f9d6d6"/>
<path d="M840 471.500h61.500l-10 15h-42z" fill="#f6c8c8"/>
<path d="M850 486.500h41l16 43h-78z" fill="#d9ecda"/>
<!-- banners -->
<path d="M706 474c26-12 52-16 77-14 22 2 42 10 58.400 23.400l-9.400 33.600c-16-14-32-22-49-26-24-4-48 2-72 17z" fill="#fff" stroke="#ececec" stroke-width="1.500"/>
<path d="M1033.600 474c-26-12-52-16-78.600-14-22 2-42 10-58.200 23.400l7.700 33.600c16-14 32-22 50.500-26 24-4 48 2 74 17z" fill="#fff" stroke="#ececec" stroke-width="1.500"/>
<text x="764" y="492" font-family="Liberation Sans, sans-serif" font-weight="700" font-size="21" fill="#fefcf0" text-anchor="middle" transform="rotate(-4 764 492)">FEBRERO</text>
<text x="968" y="488" font-family="Liberation Sans, sans-serif" font-weight="700" font-size="21" fill="#fefcf0" text-anchor="middle" transform="rotate(6 968 488)">DE 1946</text>
<text x="868" y="526" font-family="Liberation Sans, sans-serif" font-size="33" fill="#f4faf4" text-anchor="middle">7</text>
<g font-family="Liberation Sans, sans-serif" font-size="5.500" fill="#e3e1e1" text-anchor="middle" transform="rotate(-8 822 585)"><text x="822" y="575">SAN</text><text x="822" y="583">JUAN</text><text x="822" y="591">DE JUANA</text><text x="822" y="599">DE ORO</text></g>
</g>
</svg>
<span class="g" style="left:631.5px;top:198.00px;font-size:28px;color:#9db2de;font-weight:700;letter-spacing:0.536px;">Gobierno Autónomo Descentralizado</span>
<span class="g" style="left:648.0px;top:231.00px;font-size:26.67px;color:#9db2de;font-weight:700;letter-spacing:-0.087px;">Parroquial San Juan de Juana de Oro</span>
<span class="g" style="left:667.5px;top:263.00px;font-size:17.3px;color:#9db2de;font-weight:700;letter-spacing:0.610px;">Dirección: León de Febres Cordero y 24 de mayo</span>
<span class="g" style="left:775.5px;top:284.00px;font-size:17.3px;color:#9db2de;font-weight:700;letter-spacing:0.675px;">RUC: 1260023860001</span>
<span class="g" style="left:790.5px;top:305.00px;font-size:17.3px;color:#9db2de;font-weight:700;letter-spacing:0.668px;">TELF: 052959122</span>
<span class="g" style="left:751.5px;top:327.00px;font-size:17.3px;color:#9db2de;font-weight:700;letter-spacing:0.579px;">Administración 2023 – 2027</span>
<div style="left:657px;top:342.5px;width:417px;height:1.5px;background:#d0dfbc;"></div>
<div style="left:862px;top:371px;width:1px;height:18.6px;background:#000;"></div>
<span class="f" style="left:825.5px;top:397.00px;font-size:14.3px;color:#1c1c1c;letter-spacing:-0.727px;">INVITACION</span>
<span class="f" style="left:892.5px;top:436.00px;font-size:14.3px;color:#1c1c1c;letter-spacing:-0.176px;">Parroquia San Juan, 06 de mayo del 2025</span>
<span class="f" style="left:571.0px;top:495.00px;font-size:14.3px;color:#1c1c1c;letter-spacing:-0.328px;">Sr.</span>
<span class="f" style="left:571.0px;top:514.00px;font-size:14.3px;color:#1c1c1c;letter-spacing:-0.027px;">Juan Párraga Monserrate</span>
<span class="f" style="left:571.7px;top:534.00px;font-size:13.8px;color:#000;letter-spacing:-0.507px;-webkit-text-stroke:0.650px #000;word-spacing:1px;">VOCAL PRINCIPAL DE LA ASAMBLEA LOCAL CIUDADANA</span>
<span class="f" style="left:571.0px;top:553.00px;font-size:14.3px;color:#1c1c1c;letter-spacing:0.053px;">Presente.-</span>
<div style="left:571px;top:566.6px;width:66.5px;height:1px;background:#3a66b5;"></div>
<div style="left:571px;top:568.6px;width:66.5px;height:1px;background:#3a66b5;"></div>
<span class="f" style="left:571.3px;top:593.00px;font-size:14.3px;color:#1c1c1c;letter-spacing:-0.067px;">De mis consideraciones:</span>
<span class="f" style="left:571.0px;top:633.00px;font-size:14.3px;color:#1c1c1c;letter-spacing:0.207px;">Por medio del presente documento tengo a bien invitarla a una reunión de trabajo a usted</span>
<span class="f" style="left:571.0px;top:652.00px;font-size:14.3px;color:#1c1c1c;letter-spacing:0.288px;">con la finalidad de coordinar el proceso de rendición de cuentas del año 2024 en función</span>
<span class="f" style="left:571.0px;top:672.00px;font-size:14.3px;color:#1c1c1c;letter-spacing:0.033px;">de ir cumpliendo con las Fases de dicho proceso. En virtud que nos encontramos en la </span>
<span class="f" style="left:1127.9px;top:672.00px;font-size:14.3px;color:#000;letter-spacing:-0.649px;-webkit-text-stroke:0.650px #000;">Fase</span>
<span class="f" style="left:571.5px;top:692.00px;font-size:14.3px;color:#000;letter-spacing:0.051px;-webkit-text-stroke:0.650px #000;">1 Planificación y facilitación.</span>
<div style="left:1349px;top:185px;width:17px;height:521px;background:#f0f0f0;"></div>
<div style="left:1350.500px;top:187px;width:12px;height:12px;background:#fff;border:1px solid #ababab;box-sizing:content-box"></div>
<svg style="left:1353px;top:190px;" width="9" height="7" viewBox="0 0 9 7"><path d="M0.500 5.500l4-4.200 4 4.200z" fill="#222"/></svg>
<div style="left:1350.500px;top:209px;width:12px;height:72px;background:#fff;border:1px solid #ababab"></div>
<div style="left:1350.500px;top:689.500px;width:12px;height:12px;background:#fff;border:1px solid #ababab"></div>
<svg style="left:1353px;top:693px;" width="9" height="7" viewBox="0 0 9 7"><path d="M0.500 1.200l4 4.200 4-4.200z" fill="#222"/></svg>
<div style="left:0px;top:706px;width:1366px;height:1px;background:#c8c8c8;"></div>
<div style="left:0px;top:707px;width:1366px;height:21px;background:#f3f3f3;"></div>
<span class="f" style="left:7.0px;top:712.00px;font-size:12px;letter-spacing:-0.428px;">Página 1 de 1</span>
<svg style="left:112px;top:710px;" width="16" height="14" viewBox="0 0 16 14"><g fill="none" stroke="#444" stroke-width="1.100"><path d="M7.500 2v10.500M7.500 2.200c-2.200-1.200-4.400-1.200-6.500-.4v10.200c2.100-.8 4.300-.8 6.500.5"/><path d="M7.500 2.200c1.600-1 3-1.200 4.400-1M7.500 12.500c1-.6 1.600-.8 2.200-.9"/><path d="M9.200 11.700l.6-2.600 4.300-5.300 1.300 1.100-4.200 5.300z"/></g></svg>
<span class="f" style="left:144.0px;top:712.00px;font-size:12px;letter-spacing:-0.537px;">Español (España)</span>
<svg style="left:961px;top:710px;" width="16" height="15" viewBox="0 0 16 15"><g fill="none" stroke="#444" stroke-width="1.100"><path d="M1 4v-3h3M12 1h3v3M15 11v3h-3M4 14h-3v-3"/><path d="M4.500 3.500h4.500l2.500 2.500v5.500h-7z"/></g></svg>
<span class="f" style="left:979.0px;top:712.00px;font-size:12px;letter-spacing:-0.184px;">Concentración</span>
<svg style="left:1078px;top:710px;" width="16" height="14" viewBox="0 0 16 14"><g fill="none" stroke="#444" stroke-width="1.100"><path d="M8 2.500v10M8 2.500c-2.200-1.300-4.400-1.300-6.500-.5v10c2.100-.8 4.300-.8 6.500.5c2.200-1.300 4.400-1.300 6.500-.5v-10c-2.100-.8-4.300-.8-6.500.5"/><path d="M3 5h3.500M3 7h3.500M3 9h3.500M9.500 5h3.500M9.500 7h3.500M9.500 9h3.500" stroke-width="0.800"/></g></svg>
<div style="left:1106.2px;top:707px;width:39.6px;height:21px;background:#c8c8c8;"></div>
<svg style="left:1118px;top:710px;" width="15" height="15" viewBox="0 0 15 15"><g fill="none" stroke="#333" stroke-width="1.100"><rect x="1.500" y="1" width="11.500" height="13"/><path d="M3.500 4h7.500M3.500 6.300h7.500M3.500 8.600h7.500M3.500 10.900h7.500" stroke-width="1"/></g></svg>
<svg style="left:1158px;top:710px;" width="18" height="15" viewBox="0 0 18 15"><g fill="none" stroke="#444" stroke-width="1.100"><path d="M8 13.500h-6.500v-12.500h11.500v5"/><path d="M3.500 4h7.500M3.500 6.500h7M3.500 9h4" stroke-width="1"/><circle cx="12" cy="10.500" r="3.800" fill="#f3f3f3"/><path d="M8.200 10.500h7.600M12 6.700c-2 2.200-2 5.400 0 7.600c2-2.200 2-5.400 0-7.600" stroke-width="0.800"/></g></svg>
<div style="left:1192px;top:717.5px;width:7.5px;height:1.1px;background:#444;"></div>
<div style="left:1205.5px;top:717.5px;width:99px;height:1px;background:#8a8a8a;"></div>
<div style="left:1253px;top:711.5px;width:3.8px;height:12.5px;background:#444;"></div>
<div style="left:1310px;top:717.5px;width:8.5px;height:1.1px;background:#444;"></div>
<div style="left:1313.7px;top:713.8px;width:1.1px;height:8.5px;background:#444;"></div>
<span class="f" style="left:1331.5px;top:712.00px;font-size:12px;letter-spacing:-0.926px;">100%</span>
<div style="left:0px;top:728px;width:1366px;height:40px;background:#201f1d;"></div>
<div style="left:540px;top:728px;width:44.5px;height:40px;background:#4d4a46;"></div>
<div style="left:584.5px;top:728px;width:3px;height:40px;background:#35332f;"></div>
<div style="left:250.4px;top:766px;width:39.99999999999997px;height:2px;background:#76b9ed;"></div>
<div style="left:299px;top:766px;width:41px;height:2px;background:#76b9ed;"></div>
<div style="left:397px;top:766px;width:40px;height:2px;background:#76b9ed;"></div>
<div style="left:446px;top:766px;width:34.5px;height:2px;background:#76b9ed;"></div>
<div style="left:481.5px;top:766px;width:4.100000000000023px;height:2px;background:#76b9ed;"></div>
<div style="left:495px;top:766px;width:40px;height:2px;background:#76b9ed;"></div>
<div style="left:540px;top:766px;width:47.39999999999998px;height:2px;background:#76b9ed;"></div>
<svg style="left:15px;top:739px;" width="18" height="18" viewBox="0 0 18 18"><path d="M0.800 3l6.700-1v6.600h-6.700zM8.600 1.850l8.400-1.250v8h-8.400zM0.800 9.700h6.700v6.600l-6.700-1zM8.600 9.700h8.400v8l-8.400-1.250z" fill="#fff"/></svg>
<svg style="left:60px;top:736px;" width="24" height="24" viewBox="0 0 24 24"><g fill="none" stroke="#fff" stroke-width="2.300"><circle cx="14.600" cy="9" r="6.700"/><path d="M10 14l-7.800 8" stroke-linecap="round"/></g></svg>
<svg style="left:111px;top:736px;" width="25" height="25" viewBox="0 0 25 25"><defs><linearGradient id="cp1" x1="0" y1="0" x2="1" y2="1"><stop offset="0" stop-color="#2a7de0"/><stop offset="0.500" stop-color="#39b37a"/><stop offset="1" stop-color="#f2b93a"/></linearGradient><linearGradient id="cp2" x1="1" y1="0" x2="0" y2="1"><stop offset="0" stop-color="#b04fe0"/><stop offset="0.500" stop-color="#e84f9a"/><stop offset="1" stop-color="#f07b3f"/></linearGradient></defs><path d="M8 2.500h6.500q2.500 0 3.200 2.500l2.500 9q.8 3-2.200 3h-4l-3-11q-.5-1.500-2-1.500h-3q0-2 2-2z" fill="url(#cp2)"/><path d="M16.500 22h-6.500q-2.500 0-3.200-2.500l-2.500-9q-.8-3 2.200-3h4l3 11q.5 1.500 2 1.500h3q0 2-2 2z" fill="url(#cp1)"/><path d="M2 12q0-4.500 4.500-4.500h3l-3 9q-1 3-3 1-1.500-2-1.500-5.500z" fill="#3f9ee8" opacity="0.900"/><path d="M23 12.500q0 4.500-4.500 4.500h-3l3-9q1-3 3-1 1.500 2 1.500 5.500z" fill="#e05fb0" opacity="0.900"/></svg>
<svg style="left:158px;top:735px;" width="28" height="26" viewBox="0 0 28 26"><text x="14.500" y="23.800" font-family="Liberation Sans, sans-serif" font-weight="700" font-size="38" fill="#35b2ee" text-anchor="middle">e</text><ellipse cx="13.500" cy="13" rx="14.500" ry="6.500" fill="none" stroke="#f2c12e" stroke-width="2.200" transform="rotate(-30 13.500 13)" stroke-dasharray="27 24 40"/></svg>
<svg style="left:208px;top:736px;" width="26" height="26" viewBox="0 0 26 26"><defs><linearGradient id="ed1" x1="0" y1="0" x2="1" y2="0"><stop offset="0" stop-color="#2fb7d8"/><stop offset="1" stop-color="#5ed36a"/></linearGradient></defs><circle cx="13" cy="13" r="12" fill="#1b78c8"/><path d="M1.500 11c1-6 6-10 11.500-10 7 0 12 5 12 11 0 3-2.500 5.500-6 5.500-3 0-4-1.500-3.500-3 1.500-5-4-8-8-6-3.500 1.500-5 5-3.500 9-2-2-3-4.500-2.500-6.500z" fill="url(#ed1)"/><path d="M9 13.500c-1.500 5 2 10.500 8 10.800-4 1.500-9.500.5-12.500-3.500-3-4.500-1-10 3-12 3-1.500 6.500-.500 7.500 2-2.500-1-5 .200-6 2.700z" fill="#145fa8"/></svg>
<svg style="left:257px;top:736px;" width="26" height="26" viewBox="0 0 26 26"><circle cx="13" cy="13" r="12.200" fill="#fff"/><path d="M13 13l-10.500-6.100a12.200 12.200 0 0 1 21.100 0z" fill="#e33b2e"/><path d="M13 13l10.600-6.100a12.200 12.200 0 0 1-10.600 18.300z" fill="#fcc934"/><path d="M13 13v12.200a12.200 12.200 0 0 1-10.500-18.300z" fill="#2da94f"/><circle cx="13" cy="13" r="5.700" fill="#fff"/><circle cx="13" cy="13" r="4.500" fill="#3f7ee8"/></svg>
<svg style="left:306px;top:737px;" width="26" height="24" viewBox="0 0 26 24"><path d="M1.500 3q0-1.500 1.500-1.500h6l2.500 2.500h12v5h-22z" fill="#e8a926"/><rect x="1.500" y="5.500" width="22.500" height="15.500" rx="1" fill="#fbd254"/><path d="M6.500 21v-8.500h12.500v8.500h-3.500v-5h-5.500v5z" fill="#3d8fd8"/></svg>
<svg style="left:355px;top:736px;" width="26" height="25" viewBox="0 0 26 25"><path d="M9 4.500l8.500-4 8 4v13.500l-8 6-8.500-5z" fill="#28a8ea"/><path d="M9 9.500l8.500 5 8-5v9l-8 5.500-8.500-5.500z" fill="#0f6fc0"/><path d="M17.500 0.500l8 4v5l-8 5z" fill="#50d0f5"/><rect x="0.500" y="6.500" width="14.500" height="14" rx="1.500" fill="#0f64b8"/><text x="7.800" y="18" font-family="Liberation Sans, sans-serif" font-weight="700" font-size="12.500" fill="#fff" text-anchor="middle">O</text></svg>
<svg style="left:404px;top:735px;" width="27" height="27" viewBox="0 0 27 27"><defs><radialGradient id="ff1" cx="0.650" cy="0.200" r="0.900"><stop offset="0" stop-color="#ffe14a"/><stop offset="0.450" stop-color="#ff8a16"/><stop offset="1" stop-color="#e8305a"/></radialGradient></defs><path d="M13.500 26.500c-7 0-12-5.200-12-11.800 0-4 2-6.500 3.500-8.200-.3 1.500 0 2.500.8 3.200 1-3 3-4.500 5.200-5.700 1.500-1 2.500-2.200 2.800-3.500 3.500 2 5 5 5.500 7.500.8-1 1.200-2.200 1-3.800 3.500 2.800 5.200 6.500 5.200 10.500 0 6.600-5 11.800-12 11.800z" fill="url(#ff1)"/><circle cx="13.700" cy="14.800" r="5.600" fill="#7d2fd0"/><path d="M8 14c2-2.500 6-2.500 8 .5-2-1-4-.500-5 1-1.200 1.800-.5 4 1.500 5-3.500 0-6-3.200-4.500-6.500z" fill="#ff9a1f"/></svg>
<svg style="left:455px;top:737px;" width="22" height="22" viewBox="0 0 22 22"><rect x="0.500" y="0.500" width="21" height="21" rx="3.500" fill="#b30b00"/><path d="M10.800 4.600c-1.100 0-1.500 1.100-1.200 2.600.600 3.100 2.600 6.400 6.800 8.300 1.500.600 2.300.200 2.300-.500 0-1-2.200-1.500-5.200-1.200-3.100.300-6.300 1.400-8.400 2.900-.900.700-1.700.400-1.700-.300 0-1 2.600-2.900 4.500-5.900 1.800-2.800 3-5.900 2.900-5.900z" fill="none" stroke="#fff" stroke-width="1.350" stroke-linejoin="round"/></svg>
<svg style="left:503px;top:736px;" width="25" height="24" viewBox="0 0 25 24"><rect x="0" y="0" width="25" height="24" rx="1.500" fill="#1d3a68"/><text x="2.300" y="16.500" font-family="Liberation Sans, sans-serif" font-weight="700" font-size="12" fill="#fff">F</text><path d="M10 9h7M10 12.500h5M10 16h7" stroke="#b8a8f0" stroke-width="1.200"/><circle cx="18.500" cy="12.500" r="3.300" fill="none" stroke="#9a86ec" stroke-width="1"/><path d="M21.800 12.500h2" stroke="#fff" stroke-width="1"/></svg>
<svg style="left:551px;top:736px;" width="26" height="23" viewBox="0 0 26 23"><rect x="6.500" y="1" width="18.500" height="5.400" fill="#41a5ee"/><rect x="6.500" y="6.400" width="18.500" height="5.300" fill="#2b7cd3"/><rect x="6.500" y="11.700" width="18.500" height="5.300" fill="#185abd"/><rect x="6.500" y="17" width="18.500" height="5.200" fill="#103f91"/><rect x="0.500" y="5.500" width="13" height="12.500" rx="1" fill="#185abd"/><text x="7" y="16" font-family="Liberation Sans, sans-serif" font-weight="700" font-size="10.500" fill="#fff" text-anchor="middle">W</text></svg>
<svg style="left:1122px;top:743px;" width="15" height="10" viewBox="0 0 15 10"><path d="M1.500 8l6-6 6 6" fill="none" stroke="#fff" stroke-width="1.400"/></svg>
<svg style="left:1143px;top:740px;" width="19" height="16" viewBox="0 0 19 16"><g fill="none" stroke="#fff" stroke-width="1.100"><path d="M1.500 5.500h2.700l3.800-3.500v12l-3.800-3.500h-2.700z"/><path d="M10.500 5.500c1.200 1.500 1.200 3.500 0 5M12.800 3.500c2.300 2.700 2.300 6.300 0 9"/><path d="M15.200 1.800c3 3.700 3 8.700 0 12.400" stroke="#9a9a9a"/></g></svg>
<svg style="left:1171px;top:741px;" width="15" height="15" viewBox="0 0 15 15"><g fill="none" stroke="#9a9a9a" stroke-width="1.200"><path d="M1 8c3-5 9-6 13-4.500"/><path d="M3.500 10.500c2.500-4 6.500-4.500 10-3.500" stroke="#fff"/><path d="M6 12.500c2-2.500 4.500-3 7.500-2.200" stroke="#fff"/></g><circle cx="11" cy="13" r="1.400" fill="#fff"/></svg>
<svg style="left:1195px;top:739px;" width="15" height="18" viewBox="0 0 15 18"><g fill="none" stroke="#fff" stroke-width="1.200"><path d="M3 4.500v-1q0-2 2-2h3q2 0 2 2v1M3 13.500v1q0 2 2 2h3q2 0 2-2v-1"/><rect x="1" y="6" width="8" height="6" rx="1"/><path d="M9 8l4-2v6l-4-2"/></g></svg>
<span class="f" style="left:1221.0px;top:743.00px;font-size:11.5px;color:#fff;letter-spacing:-1.339px;">ESP</span>
<span class="f" style="left:1266.5px;top:733.00px;font-size:12px;color:#fff;letter-spacing:-0.406px;">14:22</span>
<span class="f" style="left:1257.5px;top:750.00px;font-size:12px;color:#fff;letter-spacing:0.035px;">6/5/2025</span>
<svg style="left:1324px;top:737px;" width="26" height="24" viewBox="0 0 26 24"><path d="M1 1.500h17v12h-12l-3 3v-3h-2z" fill="#fff"/><path d="M4 5h11M4 7.500h11M4 10h7" stroke="#201f1d" stroke-width="1.100"/><circle cx="17.500" cy="15.500" r="6" fill="#201f1d" stroke="#e8e8e8" stroke-width="1.200"/><text x="17.500" y="19.300" font-family="Liberation Sans, sans-serif" font-size="10.500" fill="#fff" text-anchor="middle">1</text></svg>
</div></body></html>
